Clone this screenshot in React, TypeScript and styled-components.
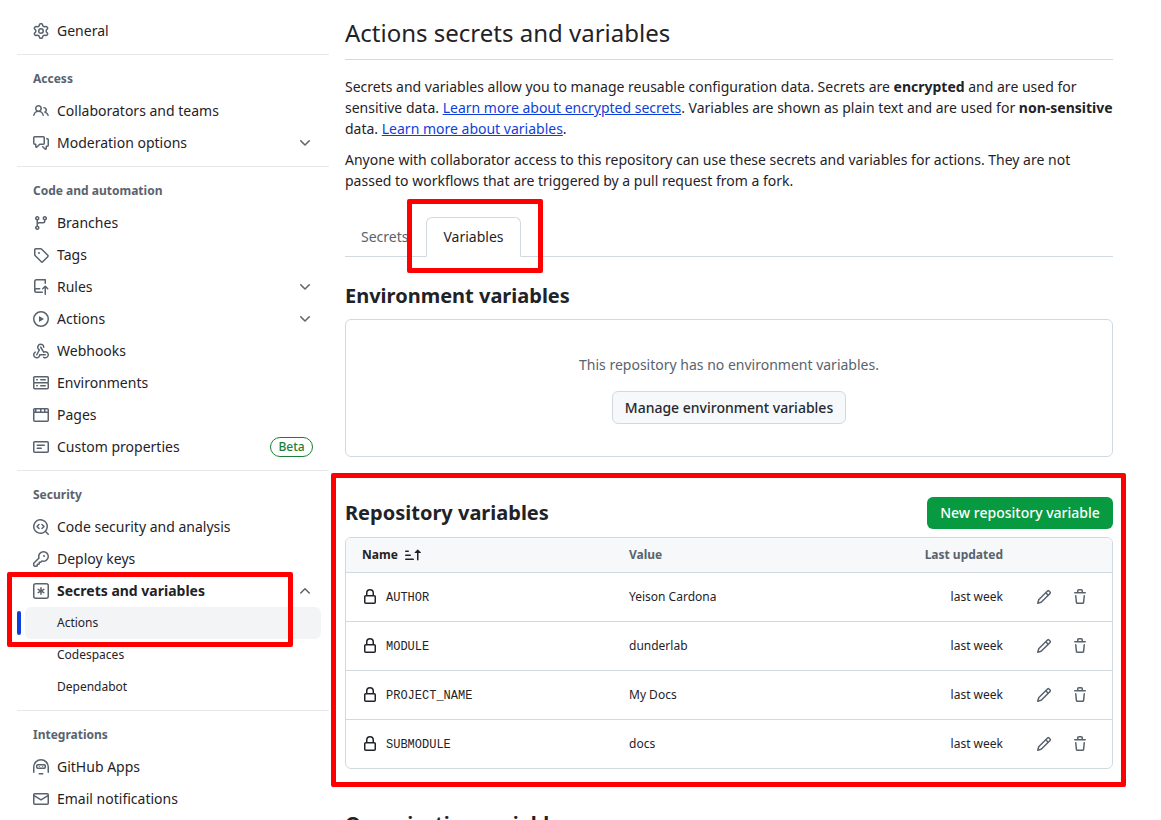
import React from "react";
import styled, { createGlobalStyle } from "styled-components";

const Global = createGlobalStyle`
  html, body { margin: 0; padding: 0; height: 820px; overflow: hidden; background: #fff; }
  body { font-family: "Noto Sans", sans-serif; font-size: 14px; line-height: 21px; color: #1f2328; }
  * { box-sizing: border-box; }
`;

const Page = styled.div`
  position: relative;
  display: flex;
  gap: 16px;
  width: 1161px;
  height: 820px;
  padding-left: 17px;
  overflow: hidden;
`;

const Sidebar = styled.nav`
  width: 312px;
  flex: none;
  padding-top: 15px;
`;

const Divider = styled.div`
  height: 1px;
  background: #e6e8eb;
  margin: 7px 0 0;
`;

const GroupTitle = styled.div`
  height: 40px;
  padding: 14px 0 0 16px;
  font-size: 12px;
  line-height: 20px;
  font-weight: 700;
  color: #59636e;
`;

const NavRow = styled.div<{ $active?: boolean; $bold?: boolean }>`
  position: relative;
  display: flex;
  align-items: center;
  height: 32px;
  margin: 0 8px;
  padding: 0 8px;
  border-radius: 6px;
  font-size: 14px;
  font-weight: ${(p) => (p.$bold ? 700 : 400)};
  color: #1f2328;
  background: ${(p) => (p.$active ? "#f3f4f6" : "transparent")};
`;

const SubRow = styled(NavRow)`
  font-size: 12px;
  padding-left: 32px;
`;

const Label = styled.span`
  margin-top: -2px;
`;

const ActiveBar = styled.span`
  position: absolute;
  left: -8px;
  top: 4px;
  width: 4px;
  height: 24px;
  border-radius: 6px;
  background: #0f3fd8;
`;

const NavIcon = styled.span`
  display: flex;
  width: 16px;
  margin-right: 8px;
  color: #59636e;
`;

const Chevron = styled.span`
  display: flex;
  margin-left: auto;
  color: #59636e;
`;

const Beta = styled.span`
  margin-left: auto;
  height: 20px;
  width: 43px;
  border: 1px solid #1a7f37;
  border-radius: 999px;
  font-size: 12px;
  line-height: 18px;
  font-weight: 500;
  text-align: center;
  color: #1a7f37;
`;

const Main = styled.main`
  width: 768px;
  flex: none;
`;

const PageTitle = styled.h1`
  margin: 0;
  height: 60px;
  padding-top: 15px;
  border-bottom: 1px solid #d1d9e0;
  font-size: 24px;
  line-height: 36px;
  font-weight: 400;
  color: #1f2328;
`;

const Para = styled.p`
  margin: 0 0 10px;
  &:first-of-type { margin-top: 16px; }
  strong { font-weight: 700; }
`;

const Link = styled.a`
  color: #0f3fd8;
  text-decoration: underline;
`;

const Tabs = styled.div`
  display: flex;
  height: 40px;
  margin-top: 26px;
  border-bottom: 1px solid #d1d9e0;
`;

const Tab = styled.div<{ $active?: boolean }>`
  height: ${(p) => (p.$active ? "40px" : "39px")};
  padding: ${(p) => (p.$active ? "8px 16px 0" : "9px 18px 0 16px")};
  border: ${(p) => (p.$active ? "1px solid #d1d9e0" : "none")};
  border-bottom: ${(p) => (p.$active ? "1px solid #fff" : "none")};
  border-radius: 6px 6px 0 0;
  background: ${(p) => (p.$active ? "#fff" : "transparent")};
  color: ${(p) => (p.$active ? "#1f2328" : "#59636e")};
`;

const SectionTitle = styled.h2`
  margin: 0;
  font-size: 20px;
  line-height: 30px;
  font-weight: 700;
  color: #1f2328;
`;

const EnvHeading = styled(SectionTitle)`
  margin-top: 24px;
`;

const EmptyBox = styled.div`
  display: flex;
  flex-direction: column;
  align-items: center;
  height: 138px;
  margin-top: 8px;
  padding-top: 34px;
  border: 1px solid #d1d9e0;
  border-radius: 6px;
  color: #59636e;
`;

const GrayButton = styled.div`
  height: 33px;
  margin-top: 16px;
  padding: 0 12px;
  display: flex;
  align-items: center;
  border: 1px solid #d1d9e0;
  border-radius: 6px;
  background: #f6f8fa;
  font-weight: 500;
  color: #25292e;
`;

const RepoHeader = styled.div`
  display: flex;
  align-items: center;
  justify-content: space-between;
  margin-top: 40px;
  height: 32px;
`;

const GreenButton = styled.div`
  height: 32px;
  width: 186px;
  padding-bottom: 1px;
  display: flex;
  align-items: center;
  justify-content: center;
  border-radius: 6px;
  background: #079a41;
  font-weight: 500;
  color: #fff;
`;

const Table = styled.div`
  margin-top: 8px;
  border: 1px solid #d1d9e0;
  border-radius: 6px;
  overflow: hidden;
`;

const columns = `grid-template-columns: 267px 1fr 140px 109px;`;

const HeadRow = styled.div`
  display: grid;
  ${columns}
  align-items: center;
  height: 35px;
  padding-left: 16px;
  padding-bottom: 2px;
  background: #f6f8fa;
  border-bottom: 1px solid #d1d9e0;
  font-size: 12px;
  font-weight: 700;
  color: #59636e;
`;

const NameHead = styled.span`
  display: flex;
  align-items: center;
  gap: 7px;
  color: #1f2328;
  svg { margin-top: 2px; }
`;

const Right = styled.span`
  text-align: right;
`;

const BodyRow = styled.div`
  display: grid;
  ${columns}
  align-items: center;
  height: 49px;
  padding-left: 16px;
  border-bottom: 1px solid #d1d9e0;
  font-size: 12px;
  color: #1f2328;
  &:last-child { height: 48px; border-bottom: none; }
`;

const Cell = styled.span`
  margin-top: -2px;
`;

const RightCell = styled(Cell)`
  text-align: right;
`;

const NameCell = styled.span`
  display: flex;
  align-items: center;
  gap: 8px;
  font-family: "Liberation Mono", monospace;
  svg { color: #1f2328; }
`;

const VarName = styled.span`
  margin-top: 2px;
`;

const Actions = styled.span`
  display: flex;
  gap: 20px;
  padding-left: 33px;
  color: #59636e;
`;

const NextHeading = styled(SectionTitle)`
  margin-top: 40px;
`;

const Marker = styled.div<{ $x: number; $y: number; $w: number; $h: number }>`
  position: absolute;
  left: ${(p) => p.$x}px;
  top: ${(p) => p.$y}px;
  width: ${(p) => p.$w}px;
  height: ${(p) => p.$h}px;
  border: 5px solid #ff0000;
  border-radius: 2px;
  pointer-events: none;
`;

const Oct = ({ d }: { d: string | string[] }) => (
  <svg width="16" height="16" viewBox="0 0 16 16" fill="currentColor" fillRule="evenodd">
    {(Array.isArray(d) ? d : [d]).map((p) => (
      <path key={p} d={p} />
    ))}
  </svg>
);

const I = {
  gear: "M8 0a8.2 8.2 0 0 1 .701.031C9.444.095 9.99.645 10.16 1.29l.288 1.107c.018.066.079.158.212.224.231.114.454.243.668.386.123.082.233.09.299.071l1.103-.303c.644-.176 1.392.021 1.82.63.27.385.506.792.704 1.218.315.675.111 1.422-.364 1.891l-.814.806c-.049.048-.098.147-.088.294.016.257.016.515 0 .772-.01.147.038.246.088.294l.814.806c.475.469.679 1.216.364 1.891a7.977 7.977 0 0 1-.704 1.217c-.428.61-1.176.807-1.82.63l-1.102-.302c-.067-.019-.177-.011-.3.071a5.909 5.909 0 0 1-.668.386c-.133.066-.194.158-.211.224l-.29 1.106c-.168.646-.715 1.196-1.458 1.26a8.006 8.006 0 0 1-1.402 0c-.743-.064-1.289-.614-1.458-1.26l-.289-1.106c-.018-.066-.079-.158-.212-.224a5.738 5.738 0 0 1-.668-.386c-.123-.082-.233-.09-.299-.071l-1.103.303c-.644.176-1.392-.021-1.82-.63a8.12 8.12 0 0 1-.704-1.218c-.315-.675-.111-1.422.363-1.891l.815-.806c.05-.048.098-.147.088-.294a6.214 6.214 0 0 1 0-.772c.01-.147-.038-.246-.088-.294l-.815-.806C.635 6.045.431 5.298.746 4.623a7.92 7.92 0 0 1 .704-1.217c.428-.61 1.176-.807 1.82-.63l1.102.302c.067.019.177.011.3-.071.214-.143.437-.272.668-.386.133-.066.194-.158.211-.224l.29-1.106C6.009.645 6.556.095 7.299.03 7.53.01 7.764 0 8 0Zm-.571 1.525c-.036.003-.108.036-.137.146l-.289 1.105c-.147.561-.549.967-.998 1.189-.173.086-.34.183-.5.29-.417.278-.97.423-1.529.27l-1.103-.303c-.109-.03-.175.016-.195.045-.22.312-.412.644-.573.99-.014.031-.021.11.059.19l.815.806c.411.406.562.957.53 1.456a4.709 4.709 0 0 0 0 .582c.032.499-.119 1.05-.53 1.456l-.815.806c-.081.08-.073.159-.059.19.162.346.353.677.573.989.02.03.085.076.195.046l1.102-.303c.56-.153 1.113-.008 1.53.27.161.107.328.204.501.29.447.222.85.629.997 1.189l.289 1.105c.029.109.101.143.137.146a6.6 6.6 0 0 0 1.142 0c.036-.003.108-.036.137-.146l.289-1.105c.147-.561.549-.967.998-1.189.173-.086.34-.183.5-.29.417-.278.97-.423 1.529-.27l1.103.303c.109.029.175-.016.195-.045.22-.313.411-.644.573-.99.014-.031.021-.11-.059-.19l-.815-.806c-.411-.406-.562-.957-.53-1.456a4.709 4.709 0 0 0 0-.582c-.032-.499.119-1.05.53-1.456l.815-.806c.081-.08.073-.159.059-.19a6.464 6.464 0 0 0-.573-.989c-.02-.03-.085-.076-.195-.046l-1.102.303c-.56.153-1.113.008-1.53-.27a4.44 4.44 0 0 0-.501-.29c-.447-.222-.85-.629-.997-1.189l-.289-1.105c-.029-.11-.101-.143-.137-.146a6.6 6.6 0 0 0-1.142 0ZM11 8a3 3 0 1 1-6 0 3 3 0 0 1 6 0ZM9.5 8a1.5 1.5 0 1 0-3.001.001A1.5 1.5 0 0 0 9.5 8Z",
  people: "M2 5.5a3.5 3.5 0 1 1 5.898 2.549 5.508 5.508 0 0 1 3.034 4.084.75.75 0 1 1-1.482.235 4 4 0 0 0-7.9 0 .75.75 0 0 1-1.482-.236A5.507 5.507 0 0 1 3.102 8.05 3.493 3.493 0 0 1 2 5.5ZM11 4a3.001 3.001 0 0 1 2.22 5.018 5.01 5.01 0 0 1 2.56 3.012.749.749 0 0 1-.885.954.752.752 0 0 1-.549-.514 3.507 3.507 0 0 0-2.522-2.372.75.75 0 0 1-.574-.73v-.352a.75.75 0 0 1 .416-.672A1.5 1.5 0 0 0 11 5.5.75.75 0 0 1 11 4Zm-5.5-.5a2 2 0 1 0-.001 3.999A2 2 0 0 0 5.5 3.5Z",
  comment: "M1.75 1h8.5c.966 0 1.75.784 1.75 1.75v5.5A1.75 1.75 0 0 1 10.25 10H7.061l-2.574 2.573A1.458 1.458 0 0 1 2 11.543V10h-.25A1.75 1.75 0 0 1 0 8.25v-5.5C0 1.784.784 1 1.75 1ZM1.5 2.75v5.5c0 .138.112.25.25.25h1a.75.75 0 0 1 .75.75v2.19l2.72-2.72a.749.749 0 0 1 .53-.22h3.5a.25.25 0 0 0 .25-.25v-5.5a.25.25 0 0 0-.25-.25h-8.5a.25.25 0 0 0-.25.25Zm13 2a.25.25 0 0 0-.25-.25h-.5a.75.75 0 0 1 0-1.5h.5c.966 0 1.75.784 1.75 1.75v5.5A1.75 1.75 0 0 1 14.25 12H14v1.543a1.458 1.458 0 0 1-2.487 1.03L9.22 12.28a.749.749 0 0 1 .326-1.275.749.749 0 0 1 .734.215l2.22 2.22v-2.19a.75.75 0 0 1 .75-.75h1a.25.25 0 0 0 .25-.25Z",
  branch: "M9.5 3.25a2.25 2.25 0 1 1 3 2.122V6A2.5 2.5 0 0 1 10 8.5H6a1 1 0 0 0-1 1v1.128a2.251 2.251 0 1 1-1.5 0V5.372a2.25 2.25 0 1 1 1.5 0v1.836A2.493 2.493 0 0 1 6 7h4a1 1 0 0 0 1-1v-.628A2.25 2.25 0 0 1 9.5 3.25Zm-6 0a.75.75 0 1 0 1.5 0 .75.75 0 0 0-1.5 0Zm8.25-.75a.75.75 0 1 0 0 1.5.75.75 0 0 0 0-1.5ZM4.25 12a.75.75 0 1 0 0 1.5.75.75 0 0 0 0-1.5Z",
  tag: "M1 7.775V2.75C1 1.784 1.784 1 2.75 1h5.025c.464 0 .91.184 1.238.513l6.25 6.25a1.75 1.75 0 0 1 0 2.474l-5.026 5.026a1.75 1.75 0 0 1-2.474 0l-6.25-6.25A1.752 1.752 0 0 1 1 7.775Zm1.5 0c0 .066.026.13.073.177l6.25 6.25a.25.25 0 0 0 .354 0l5.025-5.025a.25.25 0 0 0 0-.354l-6.25-6.25a.25.25 0 0 0-.177-.073H2.75a.25.25 0 0 0-.25.25ZM6 5a1 1 0 1 1 0 2 1 1 0 0 1 0-2Z",
  repoPush: "M1 2.5A2.5 2.5 0 0 1 3.5 0h8.75a.75.75 0 0 1 .75.75v3.5a.75.75 0 0 1-1.5 0V1.5h-8a1 1 0 0 0-1 1v6.708A2.493 2.493 0 0 1 3.5 9h3.25a.75.75 0 0 1 0 1.5H3.5a1 1 0 0 0 0 2h5.75a.75.75 0 0 1 0 1.5H3.5A2.5 2.5 0 0 1 1 11.5Zm13.23 7.79h-.001l-1.224-1.224v6.184a.75.75 0 0 1-1.5 0V9.066L10.28 10.29a.75.75 0 0 1-1.06-1.061l2.505-2.504a.75.75 0 0 1 1.06 0L15.29 9.23a.751.751 0 0 1-.018 1.042.751.751 0 0 1-1.042.018Z",
  play: "M8 0a8 8 0 1 1 0 16A8 8 0 0 1 8 0ZM1.5 8a6.5 6.5 0 1 0 13 0 6.5 6.5 0 0 0-13 0Zm4.879-2.773 4.264 2.559a.25.25 0 0 1 0 .428l-4.264 2.559A.25.25 0 0 1 6 10.559V5.442a.25.25 0 0 1 .379-.215Z",
  webhook: [
    "M5.5 4.25a2.25 2.25 0 0 1 4.5 0 .75.75 0 0 0 1.5 0 3.75 3.75 0 1 0-6.14 2.889l-2.272 4.258a.75.75 0 0 0 1.324.706L7 7.25a.75.75 0 0 0-.309-1.015A2.25 2.25 0 0 1 5.5 4.25Z",
    "M7.364 3.607a.75.75 0 0 1 1.03.257l2.608 4.349a3.75 3.75 0 1 1-.628 6.785.75.75 0 0 1 .752-1.299 2.25 2.25 0 1 0-.033-3.88.75.75 0 0 1-1.03-.256L7.107 4.636a.75.75 0 0 1 .257-1.03Z",
    "M2.9 8.776A.75.75 0 0 1 2.625 9.8 2.25 2.25 0 1 0 6 11.75a.75.75 0 0 1 .75-.751h5.5a.75.75 0 0 1 0 1.5H7.425a3.751 3.751 0 1 1-5.55-3.998.75.75 0 0 1 1.024.274Z",
  ],
  server: "M1.75 1h12.5c.966 0 1.75.784 1.75 1.75v4c0 .372-.116.717-.314 1 .198.283.314.628.314 1v4a1.75 1.75 0 0 1-1.75 1.75H1.75A1.75 1.75 0 0 1 0 12.75v-4c0-.358.109-.707.314-1a1.739 1.739 0 0 1-.314-1v-4C0 1.784.784 1 1.75 1ZM1.5 2.75v4c0 .138.112.25.25.25h12.5a.25.25 0 0 0 .25-.25v-4a.25.25 0 0 0-.25-.25H1.75a.25.25 0 0 0-.25.25Zm.25 5.75a.25.25 0 0 0-.25.25v4c0 .138.112.25.25.25h12.5a.25.25 0 0 0 .25-.25v-4a.25.25 0 0 0-.25-.25ZM7 4.75A.75.75 0 0 1 7.75 4h4.5a.75.75 0 0 1 0 1.5h-4.5A.75.75 0 0 1 7 4.75ZM7.75 10h4.5a.75.75 0 0 1 0 1.5h-4.5a.75.75 0 0 1 0-1.5ZM3 4.75A.75.75 0 0 1 3.75 4h.5a.75.75 0 0 1 0 1.5h-.5A.75.75 0 0 1 3 4.75ZM3.75 10h.5a.75.75 0 0 1 0 1.5h-.5a.75.75 0 0 1 0-1.5Z",
  browser: "M0 2.75C0 1.784.784 1 1.75 1h12.5c.966 0 1.75.784 1.75 1.75v10.5A1.75 1.75 0 0 1 14.25 15H1.75A1.75 1.75 0 0 1 0 13.25ZM14.5 6h-13v7.25c0 .138.112.25.25.25h12.5a.25.25 0 0 0 .25-.25Zm-6-3.5v2H11v-2Zm4 2h2V2.75a.25.25 0 0 0-.25-.25H12.5Zm-9-2v2H7v-2Zm-1.5 0H1.75a.25.25 0 0 0-.25.25V4.5H2Z",
  note: "M0 3.75C0 2.784.784 2 1.75 2h12.5c.966 0 1.75.784 1.75 1.75v8.5A1.75 1.75 0 0 1 14.25 14H1.75A1.75 1.75 0 0 1 0 12.25Zm1.75-.25a.25.25 0 0 0-.25.25v8.5c0 .138.112.25.25.25h12.5a.25.25 0 0 0 .25-.25v-8.5a.25.25 0 0 0-.25-.25ZM3.5 6.25a.75.75 0 0 1 .75-.75h7a.75.75 0 0 1 0 1.5h-7a.75.75 0 0 1-.75-.75Zm.75 2.25h4a.75.75 0 0 1 0 1.5h-4a.75.75 0 0 1 0-1.5Z",
  codescan: [
    "M8.47 4.97a.75.75 0 0 0 0 1.06L9.94 7.5 8.47 8.97a.75.75 0 1 0 1.06 1.06l2-2a.75.75 0 0 0 0-1.06l-2-2a.75.75 0 0 0-1.06 0ZM6.53 6.03a.75.75 0 0 0-1.06-1.06l-2 2a.75.75 0 0 0 0 1.06l2 2a.75.75 0 1 0 1.06-1.06L5.06 7.5l1.47-1.47Z",
    "M12.246 13.307a7.501 7.501 0 1 1 1.06-1.06l2.474 2.473a.749.749 0 0 1-.326 1.275.749.749 0 0 1-.734-.215ZM1.5 7.5a6.002 6.002 0 0 0 3.608 5.504 6.002 6.002 0 0 0 6.486-1.117.748.748 0 0 1 .292-.293A6 6 0 1 0 1.5 7.5Z",
  ],
  key: "M10.5 0a5.499 5.499 0 1 1-1.288 10.848l-.932.932a.749.749 0 0 1-.53.22H7v.75a.749.749 0 0 1-.22.53l-.5.5a.749.749 0 0 1-.53.22H5v.75a.749.749 0 0 1-.22.53l-.5.5a.749.749 0 0 1-.53.22h-2A1.75 1.75 0 0 1 0 14.25v-2c0-.199.079-.389.22-.53l4.932-4.932A5.5 5.5 0 0 1 10.5 0Zm-4 5.5c-.001.431.069.86.205 1.269a.75.75 0 0 1-.181.768L1.5 12.56v1.69c0 .138.112.25.25.25h1.69l.06-.06v-1.19a.75.75 0 0 1 .75-.75h1.19l.06-.06v-1.19a.75.75 0 0 1 .75-.75h1.19l1.023-1.025a.75.75 0 0 1 .768-.18A4 4 0 1 0 6.5 5.5ZM11 6a1 1 0 1 1 0-2 1 1 0 0 1 0 2Z",
  keyAsterisk: "M0 2.75A2.75 2.75 0 0 1 2.75 0h10.5A2.75 2.75 0 0 1 16 2.75v10.5A2.75 2.75 0 0 1 13.25 16H2.75A2.75 2.75 0 0 1 0 13.25ZM2.75 1.5c-.69 0-1.25.56-1.25 1.25v10.5c0 .69.56 1.25 1.25 1.25h10.5c.69 0 1.25-.56 1.25-1.25V2.75c0-.69-.56-1.25-1.25-1.25ZM8 4a.75.75 0 0 1 .75.75V6.7l1.69-.975a.75.75 0 0 1 .75 1.3L9.5 8l1.69.976a.75.75 0 0 1-.75 1.298L8.75 9.299V11.25a.75.75 0 0 1-1.5 0V9.299l-1.69.975a.75.75 0 0 1-.75-1.298L6.5 8l-1.69-.975a.75.75 0 0 1 .75-1.3l1.69.976V4.75A.75.75 0 0 1 8 4Z",
  hubot: "M0 8a8 8 0 0 1 16 0v5.25a.75.75 0 0 1-1.5 0V8a6.5 6.5 0 1 0-13 0v5.25a.75.75 0 0 1-1.5 0ZM3 6.75C3 5.784 3.784 5 4.75 5h6.5c.966 0 1.75.784 1.75 1.75v1.5A1.75 1.75 0 0 1 11.25 10h-6.5A1.75 1.75 0 0 1 3 8.25Zm1.75-.25a.25.25 0 0 0-.25.25v1.5c0 .138.112.25.25.25h6.5a.25.25 0 0 0 .25-.25v-1.5a.25.25 0 0 0-.25-.25ZM6.25 6.9a.6.6 0 0 1 .6.6.6.6 0 0 1-1.2 0 .6.6 0 0 1 .6-.6Zm3.5 0a.6.6 0 0 1 .6.6.6.6 0 0 1-1.2 0 .6.6 0 0 1 .6-.6ZM6.25 14h3.5a.75.75 0 0 1 0 1.5h-3.5a.75.75 0 0 1 0-1.5Z",
  mail: "M1.75 2h12.5c.966 0 1.75.784 1.75 1.75v8.5A1.75 1.75 0 0 1 14.25 14H1.75A1.75 1.75 0 0 1 0 12.25v-8.5C0 2.784.784 2 1.75 2ZM1.5 12.251c0 .138.112.25.25.25h12.5a.25.25 0 0 0 .25-.25V5.809L8.38 9.397a.75.75 0 0 1-.76 0L1.5 5.809v6.442Zm13-8.181v-.32a.25.25 0 0 0-.25-.25H1.75a.25.25 0 0 0-.25.25v.32L8 7.88Z",
  chevronDown: "M12.78 5.22a.749.749 0 0 1 0 1.06l-4.25 4.25a.749.749 0 0 1-1.06 0L3.22 6.28a.749.749 0 1 1 1.06-1.06L8 8.939l3.72-3.719a.749.749 0 0 1 1.06 0Z",
  chevronUp: "M3.22 10.53a.749.749 0 0 1 0-1.06l4.25-4.25a.749.749 0 0 1 1.06 0l4.25 4.25a.749.749 0 1 1-1.06 1.06L8 6.811 4.28 10.53a.749.749 0 0 1-1.06 0Z",
  lock: "M4 4a4 4 0 0 1 8 0v2h.25c.966 0 1.75.784 1.75 1.75v5.5A1.75 1.75 0 0 1 12.25 15h-8.5A1.75 1.75 0 0 1 2 13.25v-5.5C2 6.784 2.784 6 3.75 6H4Zm8.25 3.5h-8.5a.25.25 0 0 0-.25.25v5.5c0 .138.112.25.25.25h8.5a.25.25 0 0 0 .25-.25v-5.5a.25.25 0 0 0-.25-.25ZM10.5 6V4a2.5 2.5 0 1 0-5 0v2Z",
  pencil: "M11.013 1.427a1.75 1.75 0 0 1 2.474 0l1.086 1.086a1.75 1.75 0 0 1 0 2.474l-8.61 8.61c-.21.21-.47.364-.756.445l-3.251.93a.75.75 0 0 1-.927-.928l.929-3.25c.081-.286.235-.547.445-.758l8.61-8.61Zm.176 4.823L9.75 4.81l-6.286 6.287a.253.253 0 0 0-.064.108l-.558 1.953 1.953-.558a.253.253 0 0 0 .108-.064Zm1.238-3.763a.25.25 0 0 0-.354 0L10.811 3.75l1.439 1.44 1.263-1.263a.25.25 0 0 0 0-.354Z",
  trash: "M11 1.75V3h2.25a.75.75 0 0 1 0 1.5H2.75a.75.75 0 0 1 0-1.5H5V1.75C5 .784 5.784 0 6.75 0h2.5C10.216 0 11 .784 11 1.75ZM4.496 6.675l.66 6.6a.25.25 0 0 0 .249.225h5.19a.25.25 0 0 0 .249-.225l.66-6.6a.75.75 0 0 1 1.492.149l-.66 6.6A1.748 1.748 0 0 1 10.595 15h-5.19a1.75 1.75 0 0 1-1.741-1.575l-.66-6.6a.75.75 0 1 1 1.492-.15ZM6.5 1.75V3h3V1.75a.25.25 0 0 0-.25-.25h-2.5a.25.25 0 0 0-.25.25Z",
  sortAsc: "m12.927 2.573 3 3A.25.25 0 0 1 15.75 6H13.5v6.75a.75.75 0 0 1-1.5 0V6H9.75a.25.25 0 0 1-.177-.427l3-3a.25.25 0 0 1 .354 0ZM0 12.25a.75.75 0 0 1 .75-.75h7.5a.75.75 0 0 1 0 1.5H.75a.75.75 0 0 1-.75-.75Zm0-4a.75.75 0 0 1 .75-.75h4.5a.75.75 0 0 1 0 1.5H.75A.75.75 0 0 1 0 8.25Zm0-4a.75.75 0 0 1 .75-.75h2.5a.75.75 0 0 1 0 1.5H.75A.75.75 0 0 1 0 4.25Z",
};

type Item = { icon: string | string[]; label: string; chevron?: boolean; beta?: boolean };

const Rows = ({ items }: { items: Item[] }) => (
  <>
    {items.map((it) => (
      <NavRow key={it.label}>
        <NavIcon><Oct d={it.icon} /></NavIcon>
        <Label>{it.label}</Label>
        {it.chevron && <Chevron><Oct d={I.chevronDown} /></Chevron>}
        {it.beta && <Beta>Beta</Beta>}
      </NavRow>
    ))}
  </>
);

const vars = [
  ["AUTHOR", "Yeison Cardona"],
  ["MODULE", "dunderlab"],
  ["PROJECT_NAME", "My Docs"],
  ["SUBMODULE", "docs"],
];

export default function App() {
  return (
    <Page>
      <Global />
      <Sidebar>
        <Rows items={[{ icon: I.gear, label: "General" }]} />
        <Divider />
        <GroupTitle>Access</GroupTitle>
        <Rows
          items={[
            { icon: I.people, label: "Collaborators and teams" },
            { icon: I.comment, label: "Moderation options", chevron: true },
          ]}
        />
        <Divider />
        <GroupTitle>Code and automation</GroupTitle>
        <Rows
          items={[
            { icon: I.branch, label: "Branches" },
            { icon: I.tag, label: "Tags" },
            { icon: I.repoPush, label: "Rules", chevron: true },
            { icon: I.play, label: "Actions", chevron: true },
            { icon: I.webhook, label: "Webhooks" },
            { icon: I.server, label: "Environments" },
            { icon: I.browser, label: "Pages" },
            { icon: I.note, label: "Custom properties", beta: true },
          ]}
        />
        <Divider />
        <GroupTitle>Security</GroupTitle>
        <Rows
          items={[
            { icon: I.codescan, label: "Code security and analysis" },
            { icon: I.key, label: "Deploy keys" },
          ]}
        />
        <NavRow $bold>
          <NavIcon><Oct d={I.keyAsterisk} /></NavIcon>
          <Label>Secrets and variables</Label>
          <Chevron><Oct d={I.chevronUp} /></Chevron>
        </NavRow>
        <SubRow $active>
          <ActiveBar />
          <Label>Actions</Label>
        </SubRow>
        <SubRow><Label>Codespaces</Label></SubRow>
        <SubRow><Label>Dependabot</Label></SubRow>
        <Divider />
        <GroupTitle>Integrations</GroupTitle>
        <Rows
          items={[
            { icon: I.hubot, label: "GitHub Apps" },
            { icon: I.mail, label: "Email notifications" },
          ]}
        />
      </Sidebar>
      <Main>
        <PageTitle>Actions secrets and variables</PageTitle>
        <Para>
          Secrets and variables allow you to manage reusable configuration data. Secrets are <strong>encrypted</strong> and are used for
          sensitive data. <Link>Learn more about encrypted secrets</Link>. Variables are shown as plain text and are used for <strong>non-sensitive</strong> data. <Link>Learn more about variables</Link>.
        </Para>
        <Para>
          Anyone with collaborator access to this repository can use these secrets and variables for actions. They are not passed to workflows that are triggered by a pull request from a fork.
        </Para>
        <Tabs>
          <Tab>Secrets</Tab>
          <Tab $active>Variables</Tab>
        </Tabs>
        <EnvHeading>Environment variables</EnvHeading>
        <EmptyBox>
          This repository has no environment variables.
          <GrayButton>Manage environment variables</GrayButton>
        </EmptyBox>
        <RepoHeader>
          <SectionTitle>Repository variables</SectionTitle>
          <GreenButton>New repository variable</GreenButton>
        </RepoHeader>
        <Table>
          <HeadRow>
            <NameHead>Name <Oct d={I.sortAsc} /></NameHead>
            <span>Value</span>
            <Right>Last updated</Right>
            <span />
          </HeadRow>
          {vars.map(([n, v]) => (
            <BodyRow key={n}>
              <NameCell><Oct d={I.lock} /><VarName>{n}</VarName></NameCell>
              <Cell>{v}</Cell>
              <RightCell>last week</RightCell>
              <Actions><Oct d={I.pencil} /><Oct d={I.trash} /></Actions>
            </BodyRow>
          ))}
        </Table>
        <NextHeading>Organization variables</NextHeading>
      </Main>
      <Marker $x={407} $y={199} $w={136} $h={74} />
      <Marker $x={331} $y={473} $w={795} $h={314} />
      <Marker $x={7} $y={572} $w={286} $h={75} />
    </Page>
  );
}
